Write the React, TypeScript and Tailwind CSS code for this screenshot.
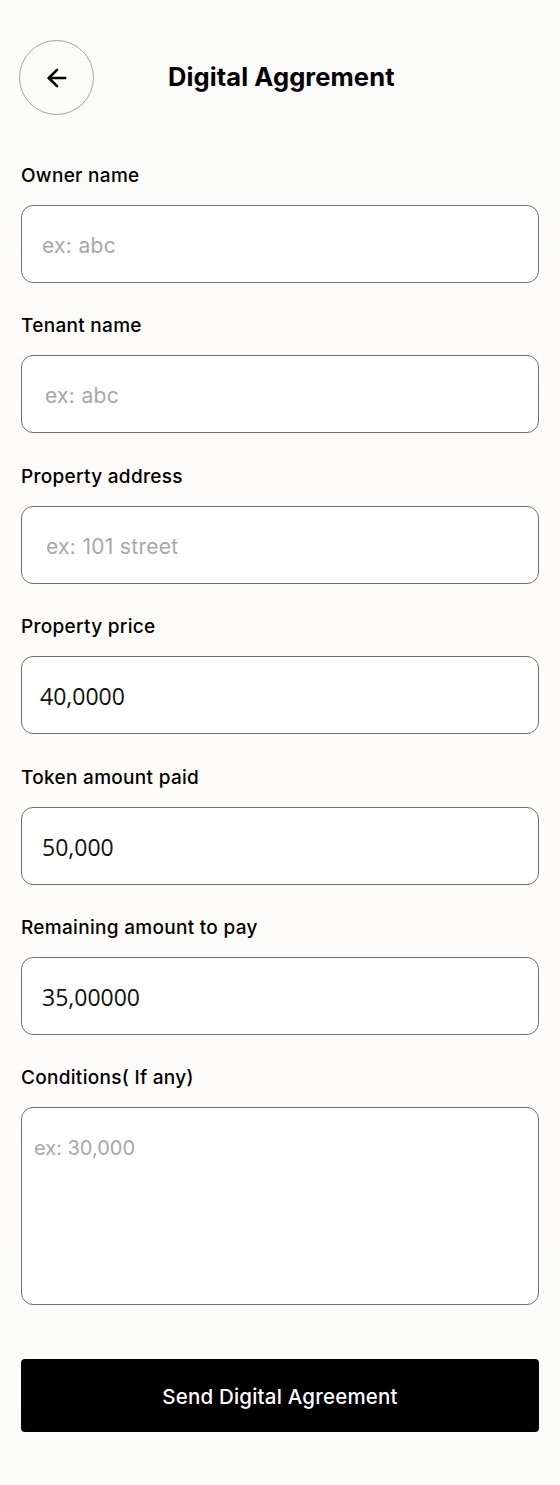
import { ArrowLeft } from "lucide-react";

const fields = [
    { label: "Owner name", placeholder: "ex: abc", value: "", pad: "pl-[20px]" },
    { label: "Tenant name", placeholder: "ex: abc", value: "", pad: "pl-[23px]" },
    { label: "Property address", placeholder: "ex: 101 street", value: "", pad: "pl-[24px]" },
    { label: "Property price", placeholder: "", value: "40,0000", pad: "pl-[18px]" },
    { label: "Token amount paid", placeholder: "", value: "50,000", pad: "pl-[20px]" },
    { label: "Remaining amount to pay", placeholder: "", value: "35,00000", pad: "pl-[20px]" },
];

export default function App() {
    return (
        <div
            className="min-h-[1485px] w-[560px] bg-gradient-to-b from-[#fbfbfa] via-[#fdfcf9] to-[#fbfbfa] px-[21px] pt-[40px] pb-[52px] text-black"
            style={{ fontFamily: "Inter, 'Liberation Sans', sans-serif" }}
        >
            <div className="relative flex h-[75px] items-center">
                <button className="-ml-[2px] flex h-[75px] w-[75px] items-center justify-center rounded-full border border-[#a3a3a3] bg-transparent">
                    <ArrowLeft className="h-[28px] w-[28px]" strokeWidth={2.2} />
                </button>
                <h1 className="absolute left-[147px] text-[25.5px] font-bold tracking-[0.1px]">Digital Aggrement</h1>
            </div>

            <div className="mt-[49px] flex flex-col">
                {fields.map((f) => (
                    <div key={f.label} className="mb-[31.4px] flex flex-col">
                        <label className="text-[19px] leading-[24px] font-medium tracking-[0.3px]">{f.label}</label>
                        <div
                            className={`mt-[17px] flex h-[78px] items-center rounded-[12px] border-[1.5px] border-[#6f6f6f] bg-white pt-[3px] ${f.pad}`}
                        >
                            {f.value ? (
                                <span className="text-[23px] text-[#111]" style={{ fontFamily: "'Open Sans', sans-serif" }}>
                                    {f.value}
                                </span>
                            ) : (
                                <span className="text-[21px] tracking-[0.3px] text-[#a8a8a8]">{f.placeholder}</span>
                            )}
                        </div>
                    </div>
                ))}

                <div className="flex flex-col">
                    <label className="text-[19px] leading-[24px] font-medium tracking-[0.3px]">Conditions( If any)</label>
                    <div className="mt-[17px] h-[198px] rounded-[12px] border-[1.5px] border-[#6f6f6f] bg-white pt-[25px] pl-[12px]">
                        <span className="text-[20px] text-[#a8a8a8]">ex: 30,000</span>
                    </div>
                </div>
            </div>

            <button className="mt-[54px] flex h-[73px] w-full items-center justify-center rounded-[4px] bg-black pt-[4px] text-[20.5px] font-medium tracking-[0.2px] text-white">
                Send Digital Agreement
            </button>
        </div>
    );
}
